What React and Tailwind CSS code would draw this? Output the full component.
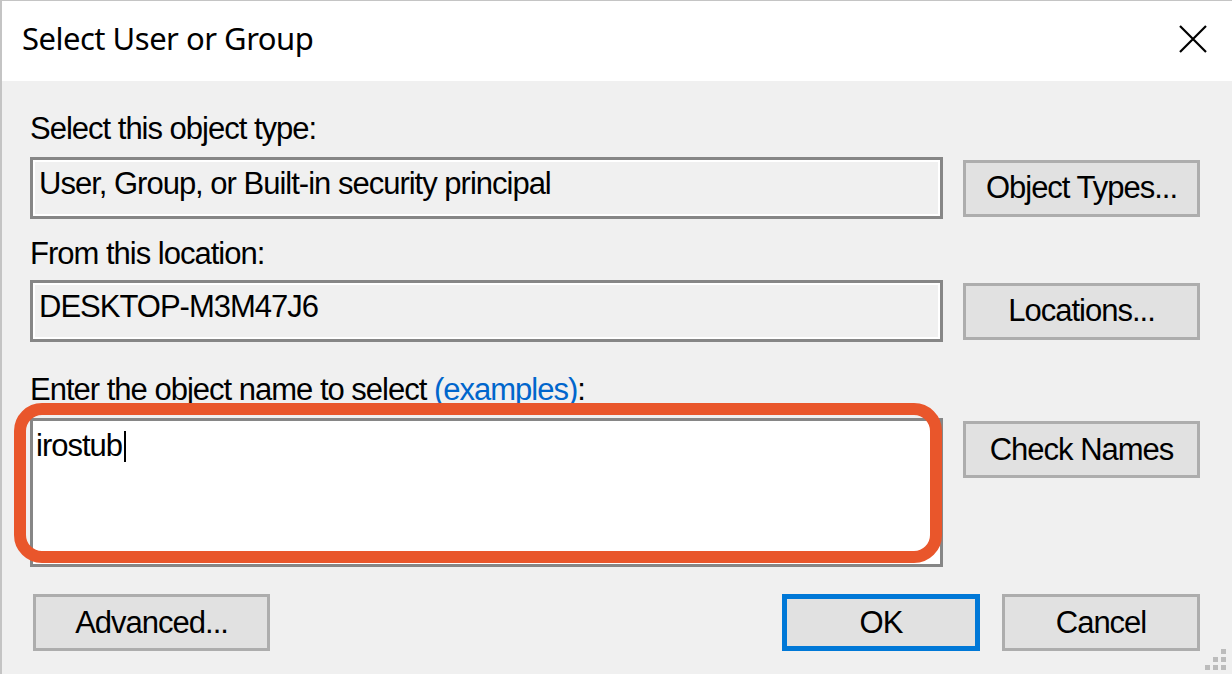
const Field = ({ children, className = "" }) => (
  <div className={"border-[3px] border-[#868686] shadow-[inset_0_0_0_2px_#ffffff] leading-[34px] " + className}>
    {children}
  </div>
);

const Button = ({ children, className = "" }) => (
  <button className={"h-[57px] bg-[#e1e1e1] flex items-center justify-center leading-[34px] " + className}>
    {children}
  </button>
);

const App = () => (
  <div className="relative w-[1232px] h-[674px] overflow-hidden flex flex-col bg-[#f0f0f0] border-l-2 border-t border-[#c4c4c4] text-black text-[31px] tracking-[-1px] font-['Liberation_Sans',Arial,sans-serif]">
    {/* Title bar */}
    <div className="h-[80px] shrink-0 bg-white flex justify-between items-start pl-[20px] pr-[25px] pt-[17px]">
      <div className="font-['Noto_Sans',sans-serif] text-[31px] tracking-[-0.5px] leading-[40px]">
        Select User or Group
      </div>
      <svg className="mt-[7px]" width="28" height="28" viewBox="0 0 28 28">
        <path d="M1 1 L27 27 M27 1 L1 27" stroke="#000" strokeWidth="2.2" />
      </svg>
    </div>

    {/* Body */}
    <div className="pl-[28px] pr-[32px] pt-[31px] flex flex-col">
      <div className="leading-[34px]">Select this object type:</div>
      <div className="mt-[11px] flex items-center gap-[20px]">
        <Field className="w-[913px] h-[62px] pl-[6px] pt-[7px] bg-[#f0f0f0]">
          User, Group, or Built-in security principal
        </Field>
        <Button className="w-[237px] h-[56px] border-[3px] border-[#adadad]">Object Types...</Button>
      </div>

      <div className="mt-[18px] leading-[34px]">From this location:</div>
      <div className="mt-[9px] flex items-center gap-[20px]">
        <Field className="w-[913px] h-[62px] pl-[6px] pt-[7px] bg-[#f0f0f0]">DESKTOP-M3M47J6</Field>
        <Button className="w-[237px] h-[56px] border-[3px] border-[#adadad]">Locations...</Button>
      </div>

      <div className="mt-[31px] leading-[34px]">
        Enter the object name to select <span className="text-[#0066cc]">(examples)</span>:
      </div>
      <div className="mt-[11px] flex items-start gap-[20px]">
        <div className="relative w-[913px] h-[149px]">
          <Field className="w-full h-full pl-[3px] pt-[8px] bg-white">
            irostub
            <span className="inline-block w-[2px] h-[31px] bg-black align-[-6px] ml-[2px]" />
          </Field>
          {/* Highlight */}
          <div className="absolute -top-[15px] -left-[16px] right-[1px] bottom-[4px] border-[12px] border-[#e9562b] rounded-[28px]" />
        </div>
        <Button className="mt-[3px] w-[237px] border-[3px] border-[#adadad]">Check Names</Button>
      </div>

      <div className="mt-[27px] flex items-center">
        <Button className="ml-[3px] w-[237px] border-[3px] border-[#adadad]">Advanced...</Button>
        <div className="flex-1" />
        <Button className="w-[198px] border-[5px] border-[#0078d7]">OK</Button>
        <Button className="ml-[22px] w-[198px] border-[3px] border-[#adadad]">Cancel</Button>
      </div>
    </div>

    {/* Size grip */}
    <div className="absolute right-[6px] bottom-[4px] grid grid-cols-3 gap-[3px]">
      <span className="w-[5px] h-[5px]" />
      <span className="w-[5px] h-[5px]" />
      <span className="w-[5px] h-[5px] bg-[#bcbcbc]" />
      <span className="w-[5px] h-[5px]" />
      <span className="w-[5px] h-[5px] bg-[#bcbcbc]" />
      <span className="w-[5px] h-[5px] bg-[#bcbcbc]" />
      <span className="w-[5px] h-[5px] bg-[#bcbcbc]" />
      <span className="w-[5px] h-[5px] bg-[#bcbcbc]" />
      <span className="w-[5px] h-[5px] bg-[#bcbcbc]" />
    </div>
  </div>
);

export default App;
